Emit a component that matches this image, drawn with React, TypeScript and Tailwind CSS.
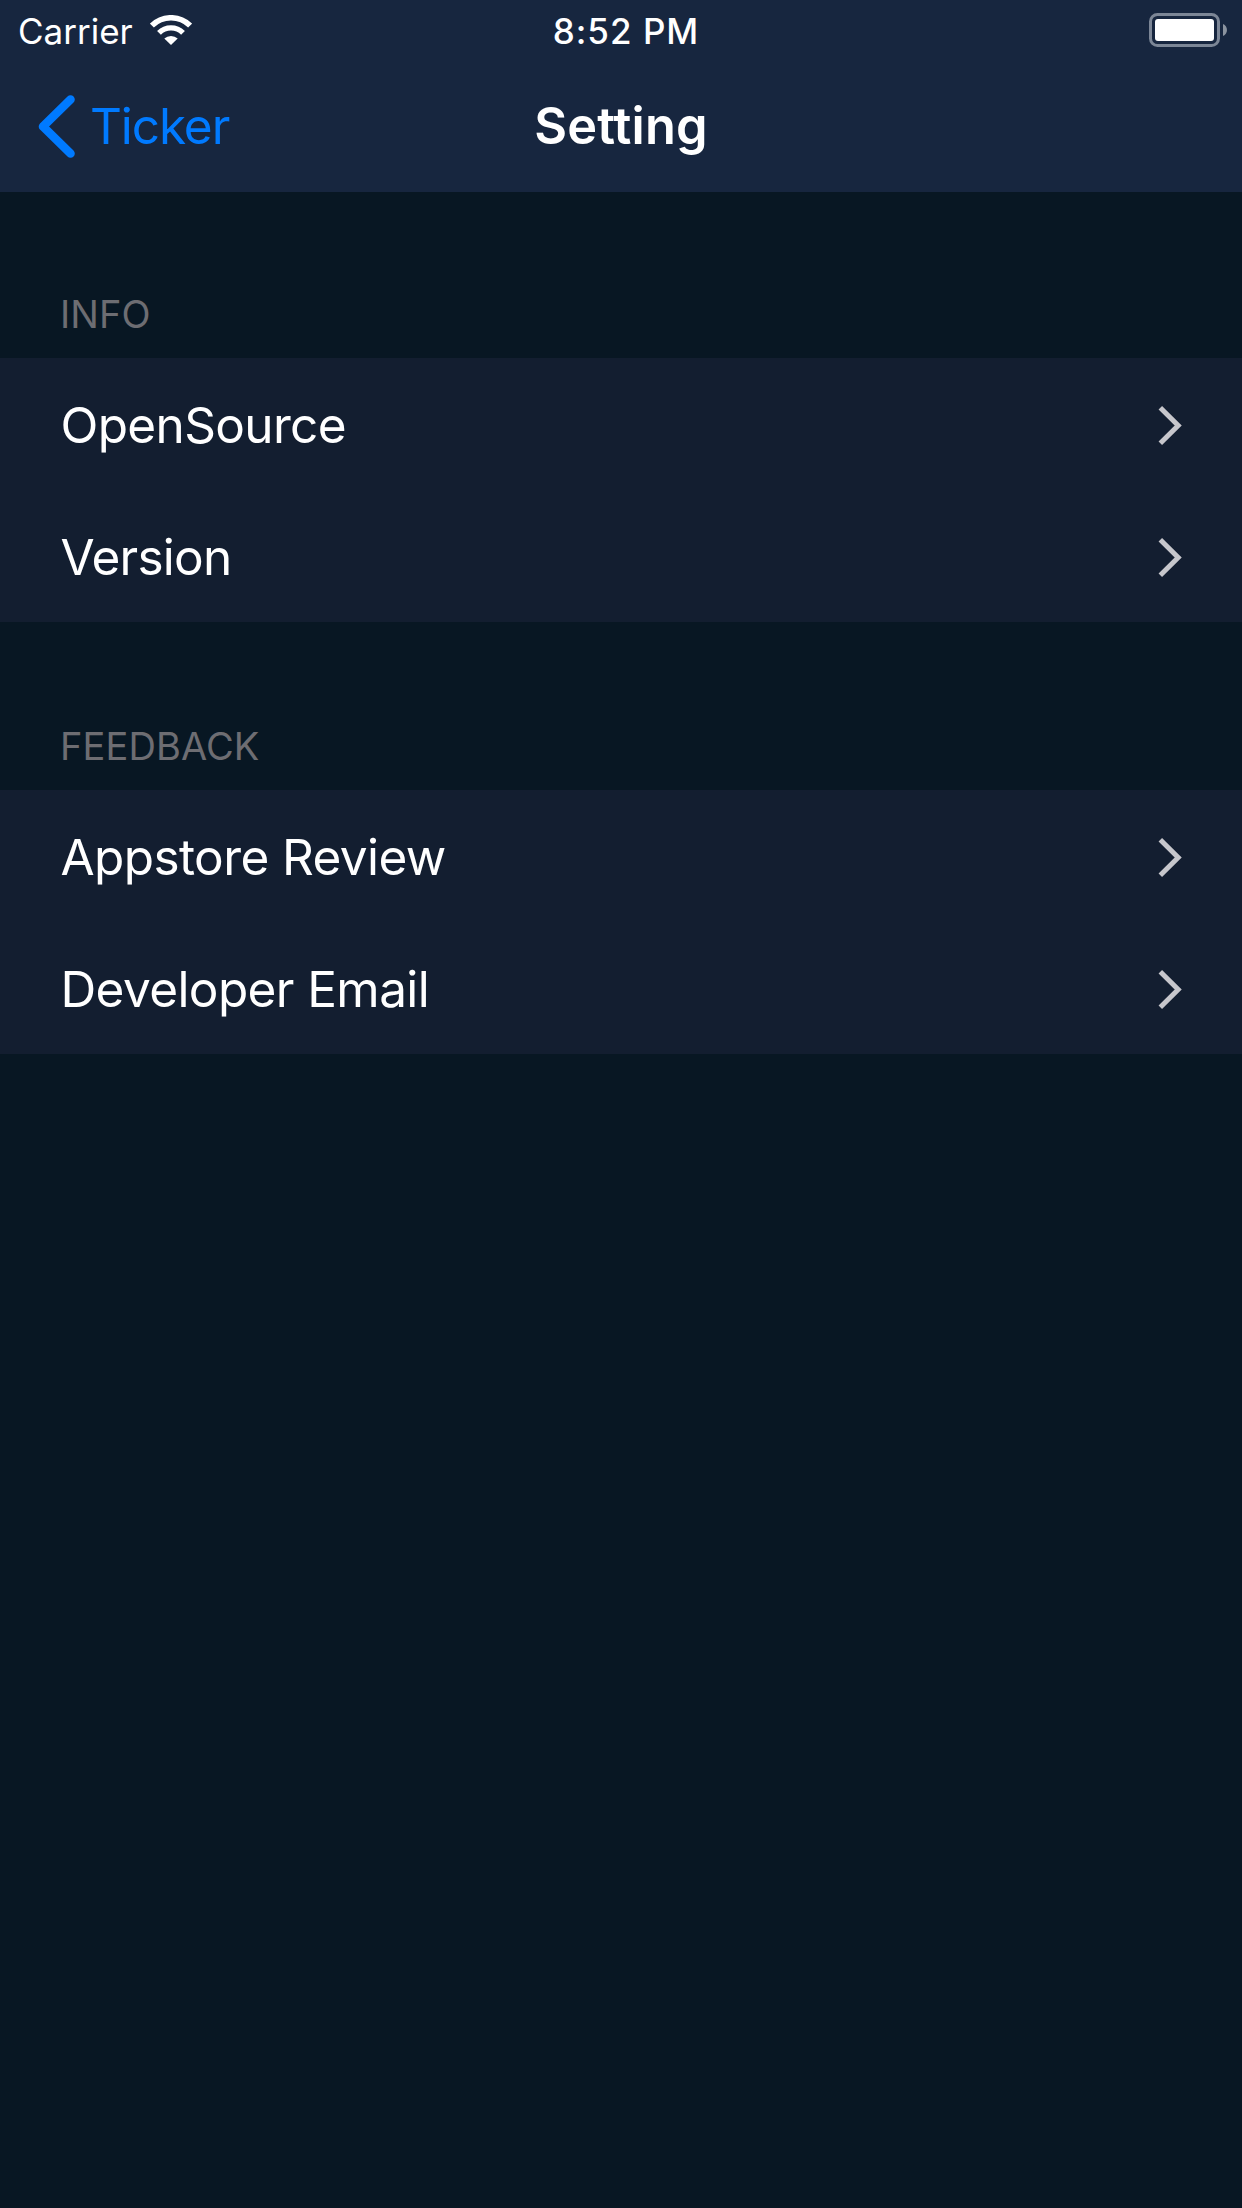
type RowItem = { label: string; spacing: string };
type SectionData = { title: string; titleSpacing: string; top: string; rows: RowItem[] };

const sections: SectionData[] = [
  {
    title: "INFO",
    titleSpacing: "tracking-[0.1px]",
    top: "h-[166px]",
    rows: [
      { label: "OpenSource", spacing: "tracking-[-0.65px]" },
      { label: "Version", spacing: "tracking-[-0.75px]" },
    ],
  },
  {
    title: "FEEDBACK",
    titleSpacing: "tracking-[0.1px]",
    top: "h-[168px]",
    rows: [
      { label: "Appstore Review", spacing: "tracking-[-0.6px]" },
      { label: "Developer Email", spacing: "tracking-[-0.6px]" },
    ],
  },
];

function WifiIcon() {
  return (
    <svg width="42" height="30" viewBox="0 0 42 30" fill="none" stroke="#fff">
      <path d="M1.9 10.6A27.2 27.2 0 0 1 40.1 10.6" strokeWidth="5.6" />
      <path d="M9 17.8A17 17 0 0 1 33 17.8" strokeWidth="5.4" />
      <path d="M14.3 23.6A9.6 9.6 0 0 1 27.7 23.6L21 30Z" fill="#fff" stroke="none" />
    </svg>
  );
}

function BatteryIcon() {
  return (
    <svg width="79" height="34" viewBox="0 0 79 34" fill="none">
      <rect x="1.5" y="1.5" width="68" height="31" rx="7" stroke="#7c8696" strokeWidth="3" />
      <rect x="6" y="6" width="59" height="22" rx="3" fill="#fff" />
      <path d="M74 11C79.3 13 79.3 21 74 23Z" fill="#8b939f" />
    </svg>
  );
}

function BackIcon() {
  return (
    <svg width="38" height="64" viewBox="0 0 38 64" fill="none">
      <path d="M32.5 5.5L5 32.5L32.5 59.5" stroke="#007aff" strokeWidth="8.6" strokeLinecap="round" strokeLinejoin="round" />
    </svg>
  );
}

function Disclosure() {
  return (
    <svg width="24" height="40" viewBox="0 0 24 40" fill="none">
      <path d="M2.3 2.8L20.2 20.5L2.3 38.2" stroke="#c7c7cc" strokeWidth="5" />
    </svg>
  );
}

export default function App() {
  return (
    <div className="min-h-[2208px] w-[1242px] bg-[#081723] font-['Inter',sans-serif] text-white">
      <header className="h-[192px] bg-[#17263f]">
        <div className="grid h-[60px] grid-cols-[1fr_auto_1fr] items-center text-[35px] leading-[60px]">
          <div className="flex items-center pl-[18px]">
            <span className="w-[132px] pt-[2px] leading-[58px]">Carrier</span>
            <WifiIcon />
          </div>
          <span className="translate-x-[5px] pt-[2px] leading-[58px] font-medium tracking-[1px]">8:52 PM</span>
          <div className="flex justify-end pr-[14px]">
            <BatteryIcon />
          </div>
        </div>
        <div className="grid h-[132px] grid-cols-[1fr_auto_1fr] items-center text-[49.5px] leading-[60px]">
          <div className="flex items-center gap-[14px] pl-[38px] text-[#007aff]">
            <BackIcon />
            <span className="tracking-[-1.1px]">Ticker</span>
          </div>
          <h1 className="text-[50.5px] font-semibold tracking-[0.15px]">Setting</h1>
          <div />
        </div>
      </header>
      <main>
        {sections.map((s) => (
          <section key={s.title}>
            <div className={`flex items-end pb-[20px] pl-[60px] ${s.top}`}>
              <h2 className={`text-[38px] leading-[48px] text-[#6d6d72] ${s.titleSpacing}`}>{s.title}</h2>
            </div>
            <ul className="bg-[#131e30]">
              {s.rows.map((r) => (
                <li key={r.label} className="flex h-[132px] items-center justify-between pt-[2px] pr-[60px] pl-[60.5px]">
                  <span className={`text-[49.5px] leading-[60px] ${r.spacing}`}>{r.label}</span>
                  <Disclosure />
                </li>
              ))}
            </ul>
          </section>
        ))}
      </main>
    </div>
  );
}
